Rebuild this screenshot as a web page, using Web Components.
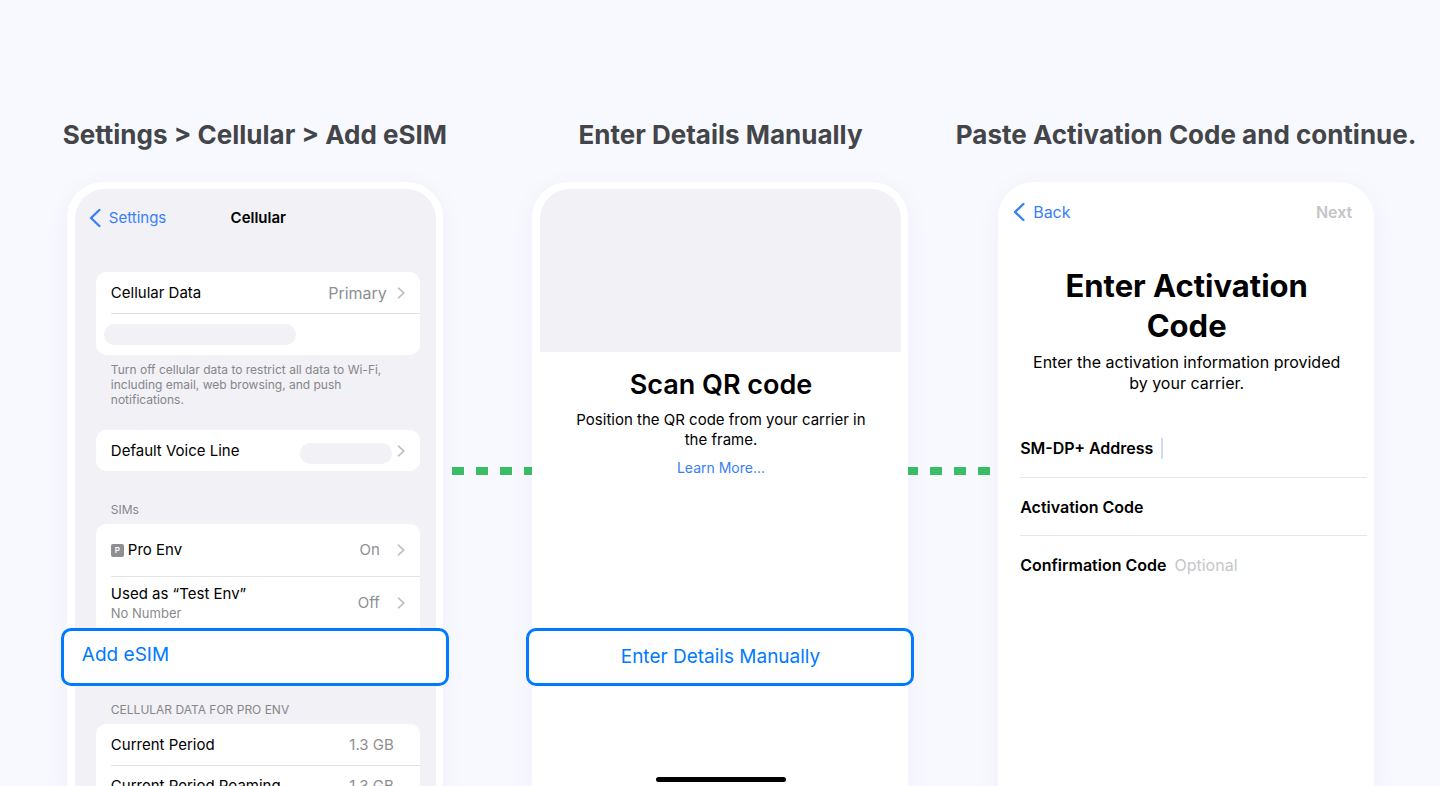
<!DOCTYPE html>
<html lang="en">
<head>
<meta charset="utf-8">
<title>Install eSIM manually</title>
<style>
  html, body { margin: 0; height: 100%; }
  body {
    background: #f8f9ff;
    font-family: Inter, "Liberation Sans", sans-serif;
    color: #000;
    overflow: hidden;
  }
</style>
</head>
<body>
<esim-guide>
  <guide-step heading="Settings &gt; Cellular &gt; Add eSIM">
    <dash-connector slot="link" class="first"></dash-connector>
    <phone-frame tinted>
      <nav-bar back="Settings" heading="Cellular"></nav-bar>
      <settings-group class="top">
        <settings-row label="Cellular Data" value="Primary" chevron large></settings-row>
        <settings-row><skeleton-pill></skeleton-pill></settings-row>
        <span slot="note">Turn off cellular data to restrict all data to Wi-Fi, including email, web browsing, and push notifications.</span>
      </settings-group>
      <settings-group class="voice">
        <settings-row label="Default Voice Line" chevron><skeleton-pill short slot="value"></skeleton-pill></settings-row>
      </settings-group>
      <settings-group heading="SIMs" open-end>
        <settings-row label="Pro Env" badge="P" value="On" chevron tall></settings-row>
        <settings-row label="Used as “Test Env”" detail="No Number" value="Off" chevron tall></settings-row>
      </settings-group>
      <callout-button label="Add eSIM" align="start"></callout-button>
      <settings-group class="usage" heading="CELLULAR DATA FOR PRO ENV">
        <settings-row label="Current Period" value="1.3 GB"></settings-row>
        <settings-row label="Current Period Roaming" value="1.3 GB"></settings-row>
      </settings-group>
    </phone-frame>
  </guide-step>

  <guide-step heading="Enter Details Manually">
    <dash-connector slot="link" class="second"></dash-connector>
    <phone-frame>
      <scan-screen></scan-screen>
    </phone-frame>
  </guide-step>

  <guide-step heading="Paste Activation Code and continue.">
    <phone-frame>
      <nav-bar back="Back" action="Next" raised></nav-bar>
      <activation-form></activation-form>
    </phone-frame>
  </guide-step>
</esim-guide>

<script>
  const esc = s => s.replace(/&/g, '&amp;').replace(/</g, '&lt;').replace(/>/g, '&gt;');

  class View extends HTMLElement {
    constructor() {
      super();
      this.attachShadow({ mode: 'open' });
    }
    attr(name) { return esc(this.getAttribute(name) || ''); }
    connectedCallback() {
      this.shadowRoot.innerHTML =
        `<style>*{box-sizing:border-box}:host{display:block;box-sizing:border-box}
         button{font:inherit;color:inherit;background:none;border:0;padding:0;margin:0;cursor:pointer}
         h1,h2,p,ul{margin:0;padding:0}${this.css()}</style>${this.html()}`;
    }
  }

  customElements.define('esim-guide', class extends View {
    css() { return `
      :host { height: 100vh; overflow: hidden; padding: 115px 21px 0 22px;
        display: grid; grid-template-columns: repeat(3, minmax(0, 1fr)); }`; }
    html() { return `<slot></slot>`; }
  });

  customElements.define('guide-step', class extends View {
    css() { return `
      :host { position: relative; display: flex; flex-direction: column; align-items: center; }
      h2 { font-size: 26px; line-height: 40px; font-weight: 700; color: #434549;
        white-space: nowrap; margin-bottom: 27px; }
      ::slotted(phone-frame) { position: relative; flex: 1; }`; }
    html() { return `<h2>${this.attr('heading')}</h2><slot name="link"></slot><slot></slot>`; }
  });

  customElements.define('dash-connector', class extends View {
    css() { return `
      :host { position: absolute; top: 352px; height: 8px; width: 84px;
        background: repeating-linear-gradient(90deg, #3bbd66 0 12px, transparent 12px 24px); }
      :host(.first) { left: calc(50% + 197px); }
      :host(.second) { left: calc(50% + 186px); }`; }
    html() { return ``; }
  });

  customElements.define('phone-frame', class extends View {
    css() { return `
      :host { width: 100%; max-width: 376px; padding: 7px 7px 0 8px; background: #fff;
        border-radius: 36px 36px 0 0; box-shadow: 0 4px 28px rgba(40, 40, 70, .04); }
      .screen { height: 100%; border-radius: 30px 30px 0 0; }
      :host([tinted]) .screen { background: #f1f1f6; }`; }
    html() { return `<div class="screen"><slot></slot></div>`; }
  });

  customElements.define('nav-bar', class extends View {
    css() { return `
      :host { display: grid; grid-template-columns: 1fr auto 1fr; align-items: center;
        height: 58px; padding: 0 8px 0 14px; font-size: 15px; line-height: 20px; }
      :host([raised]) { height: 46px; padding: 0 15px 0 7px; font-size: 16px; }
      .back { display: flex; align-items: center; gap: 8px; color: #3880f6; justify-self: start; }
      h1 { font-size: 15px; line-height: 20px; font-weight: 600; }
      .action { color: #c4c4c6; font-weight: 600; justify-self: end; }`; }
    html() {
      const action = this.attr('action');
      return `
      <button class="back">
        <svg width="12" height="20" viewBox="0 0 12 20" fill="none" stroke="#3880f6" stroke-width="2.4" stroke-linecap="round" stroke-linejoin="round"><path d="M10.4 2 2 10l8.4 8"/></svg>
        ${this.attr('back')}</button>
      <h1>${this.attr('heading')}</h1>
      ${action ? `<button class="action" disabled>${action}</button>` : '<span></span>'}`;
    }
  });

  customElements.define('settings-group', class extends View {
    css() { return `
      :host { padding: 0 16px 0 21px; }
      :host(.top) { padding-top: 25px; }
      :host(.voice) { padding-top: 23px; padding-bottom: 29px; }
      h2 { font-size: 12px; line-height: 20px; font-weight: 400; color: #86868b;
        padding: 0 15px 4px; }
      :host(.usage) h2 { padding-top: 14px; }
      .card { background: #fff; border-radius: 10px; }
      :host([open-end]) .card { border-radius: 10px 10px 0 0; }
      .note { font-size: 12px; line-height: 15px; color: #86868b; padding: 7px 15px 0; }`; }
    html() { return `
      ${this.hasAttribute('heading') ? `<h2>${this.attr('heading')}</h2>` : ''}
      <div class="card"><slot></slot></div>
      ${this.querySelector('[slot=note]') ? '<p class="note"><slot name="note"></slot></p>' : ''}`; }
  });

  customElements.define('settings-row', class extends View {
    css() { return `
      :host { padding-left: 15px; }
      .row { display: flex; align-items: center; height: 41px; padding-right: 15px;
        font-size: 15px; line-height: 20px; }
      :host(:not(:first-child)) .row { border-top: 1px solid #e3e3e6; }
      :host(:not([label])) .row { height: 42px; }
      :host([tall]) .row { height: 52px; }
      .text { flex: 1; display: flex; align-items: center; gap: 4px; }
      .detail { display: block; font-size: 13px; line-height: 18px; color: #8a8a8e; }
      .badge { width: 13px; height: 13px; border-radius: 2px; background: #8e8e93; color: #fff;
        font-size: 8px; line-height: 13px; font-weight: 600; text-align: center; }
      .value { color: #8e8e92; margin-right: 11px; }
      :host([chevron]) .value { margin-right: 17px; }
      :host([large]) .value { font-size: 16px; margin-right: 10px; }
      ::slotted(skeleton-pill[slot=value]) { margin-right: 5px; }`; }
    html() {
      const chevron = this.hasAttribute('chevron')
        ? `<svg width="8" height="12" viewBox="0 0 8 12" fill="none" stroke="#c2c2c5" stroke-width="1.7" stroke-linecap="round" stroke-linejoin="round"><path d="M1.5 1.2 6.8 6l-5.3 4.8"/></svg>` : '';
      if (!this.hasAttribute('label')) return `<div class="row"><slot></slot></div>`;
      return `<div class="row">
        <div class="text">${this.hasAttribute('badge') ? `<span class="badge">${this.attr('badge')}</span>` : ''}
          <div>${this.attr('label')}${this.hasAttribute('detail') ? `<span class="detail">${this.attr('detail')}</span>` : ''}</div></div>
        ${this.hasAttribute('value') ? `<span class="value">${this.attr('value')}</span>` : '<slot name="value"></slot>'}
        ${chevron}</div>`;
    }
  });

  customElements.define('skeleton-pill', class extends View {
    css() { return `
      :host { width: 192px; height: 21px; border-radius: 11px; background: #f1f1f6; margin-left: -7px; }
      :host([short]) { width: 92px; margin: 5px 0 0; }`; }
    html() { return ``; }
  });

  customElements.define('callout-button', class extends View {
    css() { return `
      :host { position: relative; margin: 0 -13px 0 -14px; }
      button { display: block; width: 100%; height: 58px; padding: 0 18px; background: #fff;
        border: 3px solid #007aff; border-radius: 10px; color: #007aff;
        font-size: 19px; line-height: 26px; text-align: center; }
      :host([align=start]) button { text-align: left; padding-bottom: 4px; }`; }
    html() { return `<button>${this.attr('label')}</button>`; }
  });

  customElements.define('scan-screen', class extends View {
    css() { return `
      :host { display: flex; flex-direction: column; align-items: center; text-align: center; }
      .camera { align-self: stretch; height: 163px; border-radius: 30px 30px 0 0; background: #f1f1f6; }
      h1 { font-size: 27px; line-height: 36px; font-weight: 600; margin-top: 15px; }
      p { font-size: 15px; line-height: 20px; padding: 0 24px; margin-top: 7px; }
      a { font-size: 14px; line-height: 20px; color: #3880f6; text-decoration: none; margin-top: 8px; }
      callout-button { align-self: stretch; margin-top: 150px; }
      .home { width: 130px; height: 5px; border-radius: 3px; background: #000; margin-top: 91px; }`; }
    html() { return `
      <div class="camera"></div>
      <h1>Scan QR code</h1>
      <p>Position the QR code from your carrier in<br>the frame.</p>
      <a href="#learn-more">Learn More...</a>
      <callout-button label="Enter Details Manually"></callout-button>
      <div class="home"></div>`; }
  });

  customElements.define('activation-form', class extends View {
    css() { return `
      h1 { font-size: 31px; line-height: 40px; font-weight: 700; text-align: center; margin-top: 31px; }
      p { font-size: 16px; line-height: 21px; text-align: center; margin-top: 6px; }
      form { margin: 25px 0 0 14px; }
      .field { display: flex; align-items: center; height: 58px; gap: 8px; font-size: 16px; line-height: 20px; }
      .field + .field { border-top: 1px solid #e6e6e8; }
      label { font-weight: 600; white-space: nowrap; }
      .caret { width: 2px; height: 21px; background: #d0d9fa; }
      input { flex: 1; min-width: 0; border: 0; outline: 0; padding: 0; background: none;
        font: inherit; color: #000; }
      input::placeholder { color: #c6c6c8; opacity: 1; }`; }
    html() { return `
      <h1>Enter Activation<br>Code</h1>
      <p>Enter the activation information provided<br>by your carrier.</p>
      <form>
        <div class="field"><label for="smdp">SM-DP+ Address</label><span class="caret"></span><input id="smdp" type="text"></div>
        <div class="field"><label for="activation">Activation Code</label><input id="activation" type="text"></div>
        <div class="field"><label for="confirmation">Confirmation Code</label><input id="confirmation" type="text" placeholder="Optional"></div>
      </form>`; }
  });
</script>
</body>
</html>
